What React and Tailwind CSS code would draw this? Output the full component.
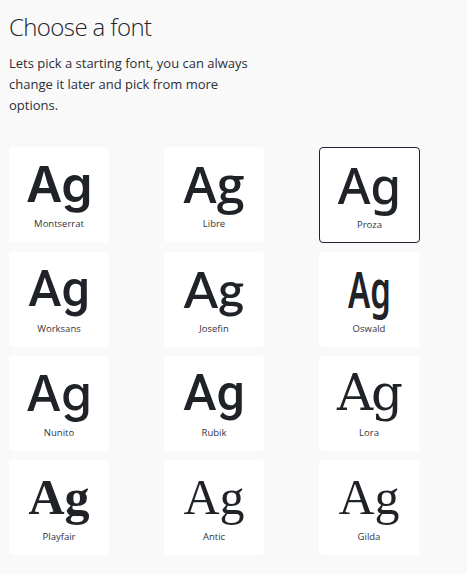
import React from 'react'

const fonts = [
    { name: 'Montserrat', cls: "font-['Inter'] font-semibold tracking-[-0.5px]" },
    { name: 'Libre', cls: "font-['Open_Sans'] font-semibold" },
    { name: 'Proza', cls: "font-['Noto_Sans'] font-medium", selected: true },
    { name: 'Worksans', cls: "font-['Roboto'] font-medium" },
    { name: 'Josefin', cls: "font-['Lato'] font-semibold" },
    { name: 'Oswald', cls: "font-['Noto_Sans'] font-semibold scale-x-[0.66]" },
    { name: 'Nunito', cls: "font-['Inter'] font-medium" },
    { name: 'Rubik', cls: "font-['Roboto'] font-medium" },
    { name: 'Lora', cls: "font-['DejaVu_Serif'] font-normal tracking-[-2px]" },
    { name: 'Playfair', cls: "font-['Liberation_Serif'] font-bold" },
    { name: 'Antic', cls: "font-['Liberation_Serif'] font-normal" },
    { name: 'Gilda', cls: "font-['Liberation_Serif'] font-normal" },
]

const FontCard = ({ font }) => {
    return (
        <div className={'w-[100px] h-[95px] bg-white rounded flex flex-col items-center ' + (font.selected ? 'border border-[#1e2433] rounded-[4px] w-[101px] h-[96px]' : '')}>
            <div className={'text-[50px] leading-none text-[#1f2226] mt-[12px] h-[50px] ' + font.cls}>Ag</div>
            <div className="text-[9.5px] text-[#2f3440] font-['Open_Sans'] mt-[8px]">{font.name}</div>
        </div>
    )
}

const App = () => {
    return (
        <div className="min-h-[574px] w-[467px] bg-[#f9f9f9] px-[9px] pt-[10px] font-['Open_Sans',sans-serif]">
            <h1 className='text-[24px] font-light text-[#22252e] leading-[34px] tracking-[-0.6px]'>Choose a font</h1>
            <p className='mt-[9px] text-[13px] leading-[21px] text-[#2b2f38] w-[250px]'>
                Lets pick a starting font, you can always change it later and pick from more options.
            </p>
            <div className='grid grid-cols-[100px_100px_101px] gap-x-[55px] gap-y-[9px] mt-[31px] items-start'>
                {fonts.map((f) => (
                    <FontCard key={f.name} font={f} />
                ))}
            </div>
        </div>
    )
}

export default App
